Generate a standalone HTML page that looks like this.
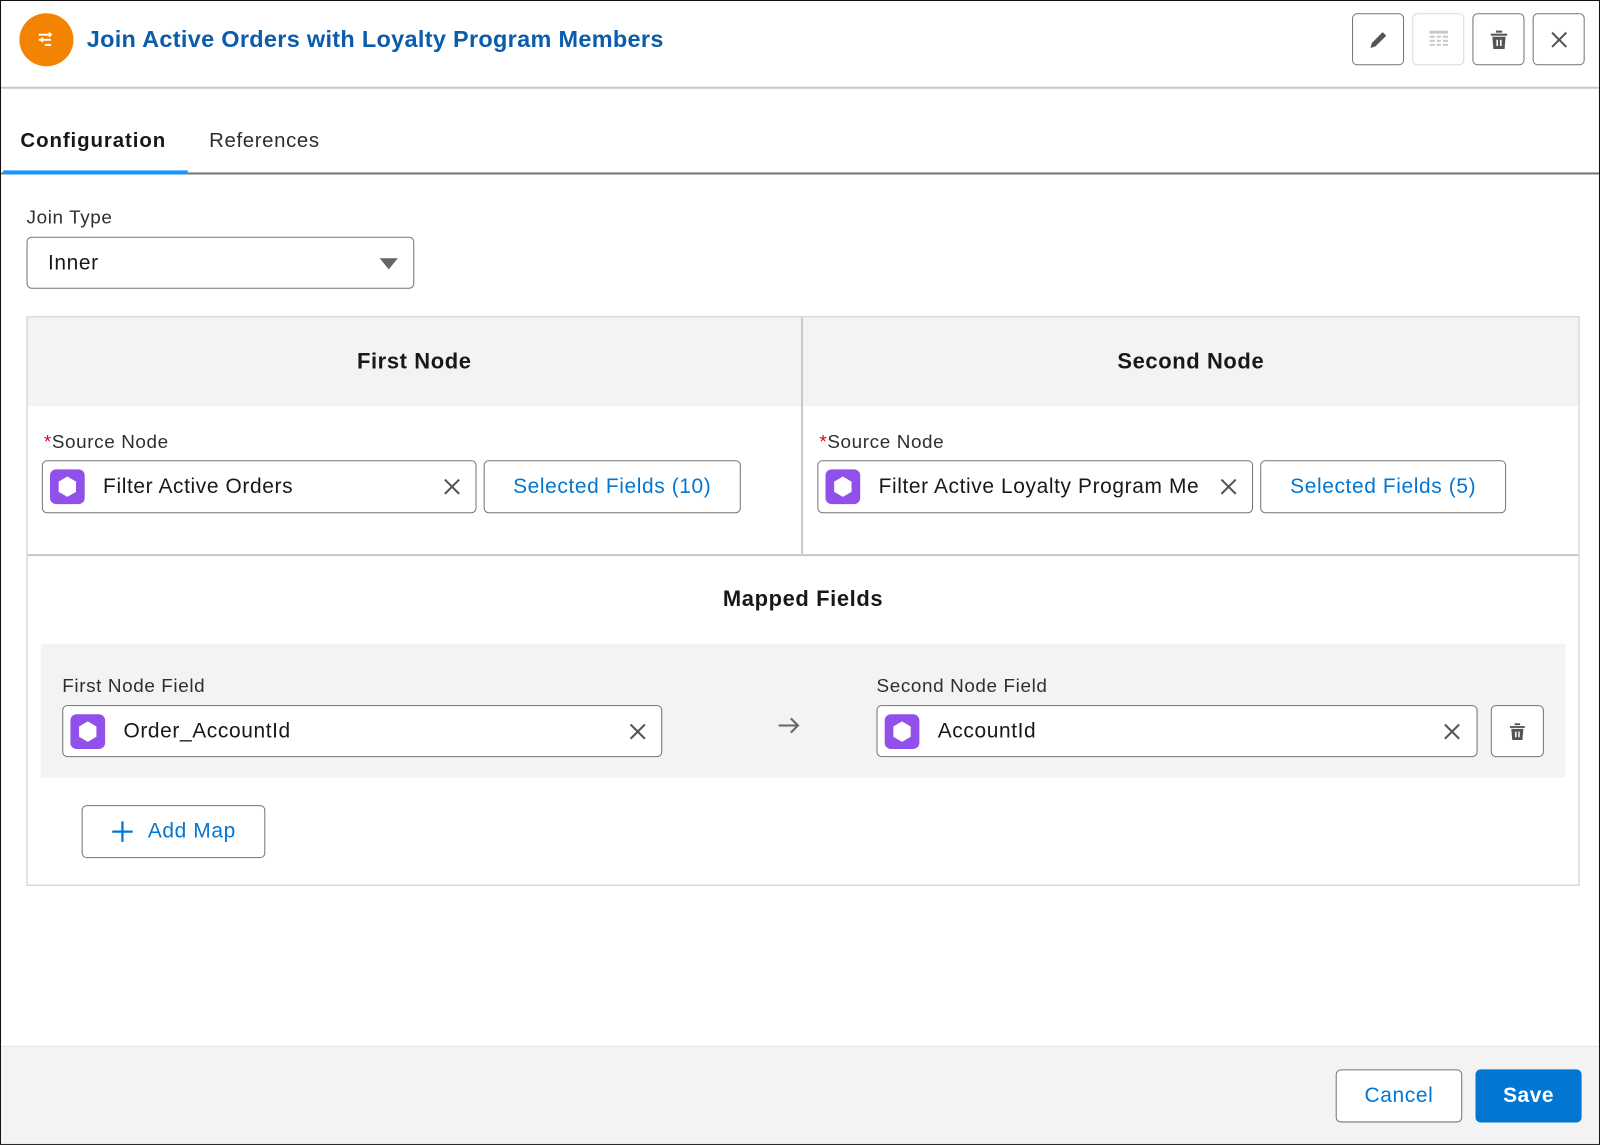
<!DOCTYPE html>
<html><head><meta charset="utf-8"><style>
*{box-sizing:border-box;margin:0;padding:0}
html,body{width:1600px;height:1145px;overflow:hidden;background:#fff}
body{font-family:"Liberation Sans",sans-serif;color:#181818}
#w{position:absolute;left:0;top:0;width:1568px;height:1122px;transform:scale(1.0204);transform-origin:0 0;border:1.5px solid #111;background:#fff}
.a{position:absolute}
.btn{position:absolute;border:1px solid #747474;border-radius:5px;background:#fff;display:flex;align-items:center;justify-content:center}
.inp{position:absolute;border:1px solid #747474;border-radius:5px;background:#fff}
.ic{position:absolute;left:7px;top:8px;width:34px;height:34px;border-radius:6px;background:#9050e9;display:flex;align-items:center;justify-content:center}
.txt{position:absolute;left:59px;top:13px;font-size:20.5px;letter-spacing:.6px;white-space:nowrap;overflow:hidden}
.x{position:absolute;top:15px;width:20px;height:20px}
.lbl{position:absolute;font-size:18.5px;letter-spacing:.6px;color:#2e2e2e}
.blue{color:#0176d3;font-size:20.5px;letter-spacing:.6px}
.h{position:absolute;font-weight:bold;font-size:21.5px;letter-spacing:.6px;text-align:center}
</style></head><body><div id="w">
<div class="a" style="left:18px;top:12px;width:53px;height:52px;border-radius:50%;background:#f38303"></div>
<svg class="a" style="left:34px;top:28px" width="20" height="20" viewBox="0 0 20 20" fill="none" stroke="#fff" stroke-width="1.8"><path d="M3 5h12M3 10h12M9 15h6M13 3l2 2-2 2M7 8l-2 2 2 2"/></svg>
<div class="a" style="left:84px;top:24px;font-size:23px;letter-spacing:.3px;font-weight:bold;color:#0b5cab">Join Active Orders with Loyalty Program Members</div>
<div class="btn" style="left:1324px;top:12px;width:51px;height:51px"><svg width="22" height="22" viewBox="0 0 22 22"><path d="M3 19l1.5-5L15 3.5l3.5 3.5L8 17.5z" fill="#555"/></svg></div>
<div class="btn" style="left:1383px;top:12px;width:51px;height:51px;border-color:#d8d8d8"><svg width="22" height="22" viewBox="0 0 22 22" fill="#c9c9c9"><rect x="2" y="2" width="18" height="3"/><rect x="2" y="7" width="5" height="2"/><rect x="9" y="7" width="4" height="2"/><rect x="15" y="7" width="5" height="2"/><rect x="2" y="11" width="5" height="2"/><rect x="9" y="11" width="4" height="2"/><rect x="15" y="11" width="5" height="2"/><rect x="2" y="15" width="5" height="2"/><rect x="9" y="15" width="4" height="2"/><rect x="15" y="15" width="5" height="2"/></svg></div>
<div class="btn" style="left:1442px;top:12px;width:51px;height:51px"><svg width="22" height="22" viewBox="0 0 22 22" fill="#555"><rect x="3" y="5" width="16" height="2"/><rect x="8" y="2" width="6" height="2"/><path d="M4.5 8h13l-1 12h-11z"/><rect x="8.5" y="11" width="1.6" height="6" fill="#fff"/><rect x="12" y="11" width="1.6" height="6" fill="#fff"/></svg></div>
<div class="btn" style="left:1501px;top:12px;width:51px;height:51px"><svg width="20" height="20" viewBox="0 0 20 20" stroke="#555" stroke-width="2"><path d="M3 3l14 14M17 3L3 17"/></svg></div>
<div class="a" style="left:0;top:84px;width:1566px;height:1.5px;background:#c9c9c9"></div>
<div class="a" style="left:19px;top:126px;font-size:20px;letter-spacing:.9px;font-weight:bold">Configuration</div>
<div class="a" style="left:204px;top:126px;font-size:20px;letter-spacing:.6px;color:#2e2e2e">References</div>
<div class="a" style="left:0;top:168px;width:1566px;height:1.5px;background:#747474"></div>
<div class="a" style="left:2px;top:166px;width:181px;height:4px;background:#1b96ff"></div>
<div class="lbl" style="left:25px;top:201px">Join Type</div>
<div class="inp" style="left:25px;top:231px;width:380px;height:51px"><div class="a" style="left:20px;top:13px;font-size:20.5px;letter-spacing:.6px">Inner</div><svg class="a" style="left:345px;top:20px" width="18" height="12"><path d="M0 0h18l-9 11z" fill="#666"/></svg></div>
<div class="a" style="left:25px;top:309px;width:1522px;height:558px;border:1.5px solid #c9c9c9"></div>
<div class="a" style="left:26px;top:310px;width:1520px;height:87px;background:#f3f3f3"></div>
<div class="a" style="left:784px;top:310px;width:1.5px;height:233px;background:#c9c9c9"></div>
<div class="a" style="left:26px;top:542px;width:1520px;height:1.5px;background:#c9c9c9"></div>
<div class="h" style="left:26px;top:341px;width:758px">First Node</div>
<div class="h" style="left:786px;top:341px;width:760px">Second Node</div>
<div class="lbl" style="left:42px;top:421px"><span style="color:#ea001e">*</span>Source Node</div>
<div class="lbl" style="left:802px;top:421px"><span style="color:#ea001e">*</span>Source Node</div>
<div class="inp" style="left:40px;top:450px;width:426px;height:52px"><div class="ic"><svg width="20" height="22" viewBox="0 0 20 22"><path d="M10 1l8.5 5v10L10 21 1.5 16V6z" fill="#fff"/></svg></div><div class="txt">Filter Active Orders</div><svg class="x" style="left:391px" viewBox="0 0 20 20" stroke="#555" stroke-width="2"><path d="M3 3l14 14M17 3L3 17"/></svg></div>
<div class="btn" style="left:473px;top:450px;width:252px;height:52px"><span class="blue">Selected Fields (10)</span></div>
<div class="inp" style="left:800px;top:450px;width:427px;height:52px"><div class="ic"><svg width="20" height="22" viewBox="0 0 20 22"><path d="M10 1l8.5 5v10L10 21 1.5 16V6z" fill="#fff"/></svg></div><div class="txt" style="width:314px">Filter Active Loyalty Program Members</div><svg class="x" style="left:392px" viewBox="0 0 20 20" stroke="#555" stroke-width="2"><path d="M3 3l14 14M17 3L3 17"/></svg></div>
<div class="btn" style="left:1234px;top:450px;width:241px;height:52px"><span class="blue">Selected Fields (5)</span></div>
<div class="h" style="left:26px;top:574px;width:1520px">Mapped Fields</div>
<div class="a" style="left:39px;top:630px;width:1494px;height:131px;background:#f3f3f3"></div>
<div class="lbl" style="left:60px;top:660px">First Node Field</div>
<div class="lbl" style="left:858px;top:660px">Second Node Field</div>
<div class="inp" style="left:60px;top:690px;width:588px;height:51px"><div class="ic" style="left:7px;top:8px"><svg width="20" height="22" viewBox="0 0 20 22"><path d="M10 1l8.5 5v10L10 21 1.5 16V6z" fill="#fff"/></svg></div><div class="txt">Order_AccountId</div><svg class="x" style="left:553px" viewBox="0 0 20 20" stroke="#555" stroke-width="2"><path d="M3 3l14 14M17 3L3 17"/></svg></div>
<svg class="a" style="left:761px;top:700px" width="22" height="20" viewBox="0 0 22 20" fill="none" stroke="#666" stroke-width="2"><path d="M1 10h19M13 3l7 7-7 7"/></svg>
<div class="inp" style="left:858px;top:690px;width:589px;height:51px"><div class="ic"><svg width="20" height="22" viewBox="0 0 20 22"><path d="M10 1l8.5 5v10L10 21 1.5 16V6z" fill="#fff"/></svg></div><div class="txt">AccountId</div><svg class="x" style="left:553px" viewBox="0 0 20 20" stroke="#555" stroke-width="2"><path d="M3 3l14 14M17 3L3 17"/></svg></div>
<div class="btn" style="left:1460px;top:690px;width:52px;height:51px"><svg width="20" height="22" viewBox="0 0 22 22" fill="#555"><rect x="3" y="5" width="16" height="2"/><rect x="8" y="2" width="6" height="2"/><path d="M4.5 8h13l-1 12h-11z"/><rect x="8.5" y="11" width="1.6" height="6" fill="#fff"/><rect x="12" y="11" width="1.6" height="6" fill="#fff"/></svg></div>
<div class="btn" style="left:79px;top:788px;width:180px;height:52px"><svg width="22" height="22" viewBox="0 0 22 22" stroke="#0176d3" stroke-width="2.2"><path d="M11 1v20M1 11h20"/></svg><span class="blue" style="margin-left:14px">Add Map</span></div>
<div class="a" style="left:0;top:1024px;width:1566px;height:96px;background:#f3f3f3;border-top:1.5px solid #e5e5e5"></div>
<div class="btn" style="left:1308px;top:1047px;width:124px;height:52px"><span class="blue">Cancel</span></div>
<div class="btn" style="left:1445px;top:1047px;width:104px;height:52px;background:#0176d3;border-color:#0176d3"><span style="color:#fff;font-size:20.5px;letter-spacing:.5px;font-weight:bold">Save</span></div>
</div></body></html>
